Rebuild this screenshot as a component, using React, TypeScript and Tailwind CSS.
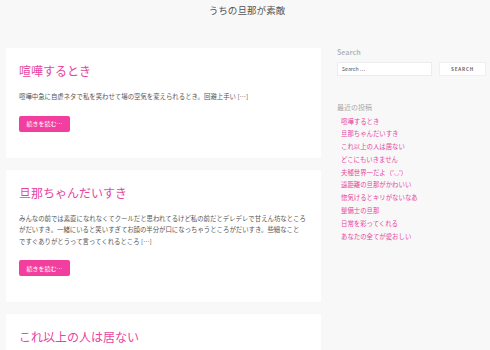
import React from "react";

const pink = "text-[#e8449f]";

function Card({ title, lines, button = true }: { title: string; lines: string[]; button?: boolean }) {
  return (
    <div className="bg-white pt-[15px] pb-[26px] pl-[13px] pr-[8px]">
      <h2 className={`text-[12px] leading-[16px] ${pink} font-normal whitespace-nowrap`}>{title}</h2>
      {lines.length > 0 && (
        <p className="mt-[12px] text-[6.4px] leading-[11.5px] text-[#555] whitespace-nowrap">
          {lines.map((l, i) => (
            <React.Fragment key={i}>
              {l}
              {i < lines.length - 1 && <br />}
            </React.Fragment>
          ))}
        </p>
      )}
      {button && (
        <div className="mt-[13px] flex">
          <span className="h-[16px] w-[51px] flex items-center justify-center rounded-[2px] bg-[#f23e9e] text-white text-[6px] whitespace-nowrap">
            続きを読む…
          </span>
        </div>
      )}
    </div>
  );
}

const recent = [
  "喧嘩するとき",
  "旦那ちゃんだいすき",
  "これ以上の人は居ない",
  "どこにもいきません",
  "夫種世界一だよ（’◡’）",
  "遠距離の旦那がかわいい",
  "惚気けるとキリがないなあ",
  "整備士の旦那",
  "日常を彩ってくれる",
  "あなたの全てが愛おしい",
];

export default function App() {
  return (
    <div
      className="w-[490px] h-[350px] overflow-hidden bg-[#f8f8f8]"
      style={{ fontFamily: '"Noto Sans CJK JP", "Noto Sans", sans-serif' }}
    >
      <header className="pt-[4px] h-[48px] text-center">
        <div className="text-[9.6px] leading-[13px] text-[#555] pl-[4px]">うちの旦那が素敵</div>
      </header>
      <div className="flex">
        <main className="ml-[6px] w-[315px] flex flex-col gap-[12px]">
          <Card
            title="喧嘩するとき"
            lines={["喧嘩中急に自虐ネタで私を笑わせて場の空気を変えられるとき。回避上手い […]"]}
          />
          <Card
            title="旦那ちゃんだいすき"
            lines={[
              "みんなの前では素直になれなくてクールだと思われてるけど私の前だとデレデレで甘えん坊なところ",
              "がだいすき。一緒にいると笑いすぎてお顔の半分が口になっちゃうところがだいすき。些細なこと",
              "ですぐありがとうって言ってくれるところ […]",
            ]}
          />
          <Card title="これ以上の人は居ない" lines={[]} button={false} />
        </main>
        <aside className="ml-[16px] w-[149px] -mt-[1px]">
          <h3 className="text-[7px] leading-[10px] font-bold text-[#b3bcc0]">Search</h3>
          <div className="mt-[5px] flex gap-[7px]">
            <div className="w-[95px] h-[14px] bg-white border border-[#ececec] flex items-center pl-[4px] text-[5.2px] text-[#555]">
              Search …
            </div>
            <div className="w-[47px] h-[14px] bg-white border border-[#f0f0f0] flex items-center justify-center text-[4.6px] tracking-[0.8px] font-semibold text-[#666]">
              SEARCH
            </div>
          </div>
          <h3 className="mt-[26px] text-[7px] leading-[10px] text-[#aaa]">最近の投稿</h3>
          <ul className="mt-[3.5px] pl-[4px]">
            {recent.map((r) => (
              <li key={r} className={`text-[6.4px] leading-[12.8px] ${pink} whitespace-nowrap`}>
                {r}
              </li>
            ))}
          </ul>
        </aside>
      </div>
    </div>
  );
}
